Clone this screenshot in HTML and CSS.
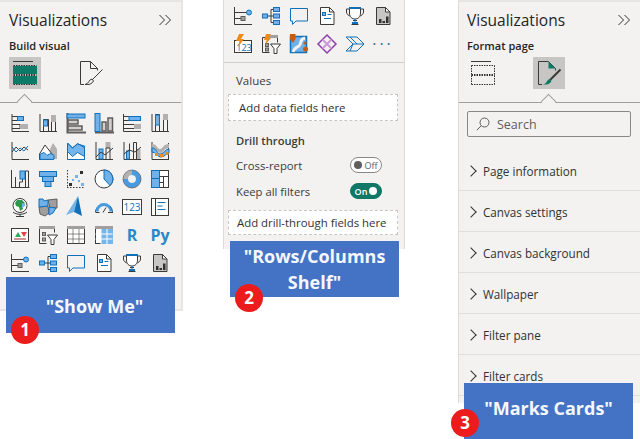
FILE: index.html
```html
<!DOCTYPE html>
<html lang="en">

<head>
  <meta charset="UTF-8">
  <meta name="viewport" content="width=device-width, initial-scale=1.0">
  <title>Visualizations pane</title>
  <link rel="stylesheet" href="styles.css">
</head>

<body>
  <svg class="defs" width="0" height="0">
    <!-- icons used more than once -->
    <symbol id="i-influencers" viewBox="0 0 20 20">
      <path class="d" d="M1.5 1v17.5H19M1.5 6.5H14M1.5 12.5H8"/>
      <circle class="bl" cx="16" cy="6.5" r="2.5"/>
      <rect class="gr" x="8" y="10.5" width="4" height="4"/>
    </symbol>
    <symbol id="i-decomp" viewBox="0 0 20 20">
      <path class="d" d="M7 10h3M10 3.500v13M10 3.500h2M10 10h2M10 16.500h2"/>
      <rect class="bl" x="1.500" y="8" width="5" height="4"/>
      <rect class="bl" x="12.500" y="1.500" width="6" height="4"/>
      <rect class="bl" x="12.500" y="8" width="6" height="4"/>
      <rect class="bl" x="12.500" y="14.500" width="6" height="4"/>
    </symbol>
    <symbol id="i-speech" viewBox="0 0 20 20">
      <path class="o" d="M1.500 2.500h17v12.500H7l-3.500 3.500V15H1.500z"/>
    </symbol>
    <symbol id="i-paginated" viewBox="0 0 20 20">
      <path class="dw" d="M3.500 1.500h9l4.500 4.500v12.500H3.500z"/>
      <path class="d" d="M12.500 1.500V6H17"/>
      <rect class="bl" x="5.500" y="6.500" width="3" height="3"/>
      <path class="o" d="M10.500 8.500h4M7 12.500h7"/>
    </symbol>
    <symbol id="i-trophy" viewBox="0 0 20 20">
      <path class="d" d="M4 3H1.500v3c0 2 2 4 4.500 4M16 3h2.500v3c0 2-2 4-4.500 4M8 14.500h4M6.500 18.500h7"/>
      <path class="dw" d="M4.500 2.500h11V7c0 4-2.500 6-5.500 6S4.500 11 4.500 7z"/>
      <rect class="fb" x="4" y="1" width="12" height="2"/>
      <rect class="fb" x="7" y="16" width="6" height="2"/>
      <path class="o" d="M10 13v3"/>
    </symbol>
    <symbol id="i-report" viewBox="0 0 20 20">
      <path class="dg" d="M3.500 1.500h9l4.500 4.500v12.500H3.500z"/>
      <path class="dw" d="M12.500 1.500V6H17z"/>
      <path class="fd" d="M6 13h2.500v4H6zM9.500 15H12v2H9.500zM13 10.500h2.500V17H13z"/>
    </symbol>
  </svg>

  <!-- panel 1 -->
  <aside class="panel panel-build">
    <header class="pane-head">
      <h2>Visualizations</h2>
      <svg class="collapse" viewBox="0 0 14 12"><path d="M1.500 1l5 5-5 5M7.500 1l5 5-5 5"/></svg>
    </header>
    <h3 class="pane-sub">Build visual</h3>
    <div class="tabs">
      <button class="tab on">
        <svg viewBox="0 0 24 24">
          <path class="d" d="M0 .5h20"/>
          <rect class="fg" x="0" y="5" width="24" height="8"/>
          <rect class="fg" x="0" y="15" width="24" height="8"/>
          <path class="dash" d="M.5 4.500h23M.5 13.500h23M.5 14.500h23M.5 23.500h23"/>
        </svg>
      </button>
      <button class="tab">
        <svg viewBox="0 0 24 24">
          <path class="d" d="M1.500 23.500V.5h10l7 7v2M1.500 23.500H5M11.500.5v7h7"/>
          <path class="d" d="M23.500 8.500L13 19"/>
          <path class="d" d="M13 18c-3 0-3 5-7 5.500 4 .5 7-.5 8.500-3.500z"/>
        </svg>
      </button>
    </div>
    <div class="sep notch"></div>
    <div class="icons">
      <!-- row 1 -->
      <svg class="ico" viewBox="0 0 20 20"><path class="d" d="M2 1v17.500h17M2 3.500h6v4H2M2 11.500h8v4H2"/><rect class="bl" x="7.500" y="3.500" width="6" height="4"/><rect class="fg2" x="10" y="11" width="8" height="5"/></svg>
      <svg class="ico" viewBox="0 0 20 20"><path class="d" d="M2 1v17.500h17M5.500 18V6.500h5V18M13.500 18V2.500h4V18"/><rect class="bl" x="5.500" y="7" width="4" height="6"/><rect class="fg2" x="13" y="2" width="5" height="7"/></svg>
      <svg class="ico" viewBox="0 0 20 20"><path class="thick" d="M1.500 0v19.500H20"/><rect class="bl2" x="1" y="1" width="18" height="4"/><rect class="gbox" x="2" y="7" width="10" height="4"/><rect class="gbox" x="2" y="13" width="14" height="4"/></svg>
      <svg class="ico" viewBox="0 0 20 20"><path class="thick" d="M1 19.500h19"/><rect class="bl2" x="1" y="0.500" width="5" height="18"/><rect class="gbox" x="8" y="9" width="4" height="9"/><rect class="gbox" x="14" y="5" width="4.500" height="13"/></svg>
      <svg class="ico" viewBox="0 0 20 20"><path class="d" d="M1.500 1v17.500H19M1.500 3.500h17v4h-17M1.500 11.500h17v4h-17"/><rect class="bl" x="7" y="3.500" width="11.500" height="4"/><rect class="fg2" x="12" y="11" width="7" height="5"/></svg>
      <svg class="ico" viewBox="0 0 20 20"><path class="d" d="M2 1v17.500h17M5.500 18V1.500h4V18M13.500 18V1.500h4V18"/><rect class="bl" x="5.500" y="2" width="4" height="10"/><rect class="fg2" x="13" y="1" width="5" height="6"/></svg>
      <!-- row 2 -->
      <svg class="ico" viewBox="0 0 20 20"><path class="d" d="M2 1v17.500h17M2 11l4-5 4 4 4-4 4 3"/><path class="o" d="M2 6l4 5 4-4 4 3 4-5"/></svg>
      <svg class="ico" viewBox="0 0 20 20"><path class="gfill" d="M2 13L7 5l4 5 4-8 4 6v10H2z"/><path class="dw" d="M1.500 18.500V13L7 4l7 9v5.500z"/><path class="lfill" d="M2 18v-5l4-2 3 3 4-2 3 2v4z" transform="translate(0 .4)"/></svg>
      <svg class="ico" viewBox="0 0 20 20"><path class="lfill" d="M1.500 2l5 5 5-4 7 2v13h-17z"/><path class="o" d="M1.500 2l5 5 5-4.500 7 4"/><path class="owhite" d="M1.500 10.500l5 5 5-4 7 4v3h-17z"/><path class="o" d="M1.500 18.500H19"/></svg>
      <svg class="ico" viewBox="0 0 20 20"><path class="d" d="M2 1v17.500h17"/><rect class="bl" x="5" y="8" width="4" height="10"/><rect class="fg2" x="11.500" y="1" width="5" height="6"/><path class="d" d="M12 18V7h4v11"/><path class="d" d="M2 16l5-5 4 3 8-7"/></svg>
      <svg class="ico" viewBox="0 0 20 20"><path class="d" d="M2 1v17.500h17M7.500 18V2.500M11.500 18V1.500h3V18"/><rect class="bl" x="4.500" y="10" width="3" height="8"/><rect class="fg2" x="15" y="8" width="3.500" height="10"/><path class="d" d="M2 13l5-4 6 2 6-5"/></svg>
      <svg class="ico" viewBox="0 0 20 20"><path class="dark" d="M2 1v17.500h17M18.500 18.500V2"/><path class="gfill" d="M2 3c5 0 5 5 8 5s3-5 9-5v4c-5 0-5 5-8 5S6 8 2 8z"/><path class="lfill" d="M2 7c5 0 5 7 9 6s4-5 8-5v4c-3 0-4 4-8 4S6 11 2 11z"/><rect class="ofill" x="5" y="12" width="3" height="3"/><rect class="ofill" x="10" y="13" width="3" height="3"/><rect class="ofill" x="15.500" y="11" width="3" height="3"/></svg>
      <!-- row 3 -->
      <svg class="ico" viewBox="0 0 20 20"><path class="d" d="M1.500 1v18M1.500 18.500h18M5.500 18V8M9.500 18v-5h3V5M12.500 5h3M18.500 2v16M15.500 2h3M15.500 2v16"/><rect class="bl" x="10" y="2" width="5" height="8" /></svg>
      <svg class="ico" viewBox="0 0 20 20"><rect class="bl" x="1.500" y="2.500" width="17" height="5"/><rect class="bl" x="4.500" y="7.500" width="11" height="5"/><rect class="bl" x="7" y="12.500" width="6" height="5"/></svg>
      <svg class="ico" viewBox="0 0 20 20"><path class="d" d="M1.500 1v18M1 18.500h18" stroke-dasharray="1.500 1.500"/><rect class="fd" x="14" y="2" width="3" height="3"/><rect class="fl" x="9" y="6" width="3" height="3"/><rect class="fl" x="6" y="10" width="2" height="2"/><rect class="fd" x="3" y="14" width="3" height="3"/><rect class="fl" x="12" y="11" width="2" height="2"/><rect class="fl" x="15" y="14" width="3" height="3"/></svg>
      <svg class="ico" viewBox="0 0 20 20"><circle class="dw" cx="10" cy="10" r="9"/><path class="bl" d="M10 10V1a9 9 0 0 1 6 15.500z"/></svg>
      <svg class="ico" viewBox="0 0 20 20"><circle class="donut-g" cx="10" cy="10" r="6.500"/><path class="donut-b" d="M10 3.500a6.500 6.500 0 1 1-6.500 6.500"/><circle class="thin" cx="10" cy="10" r="9"/></svg>
      <svg class="ico" viewBox="0 0 20 20"><rect class="dw" x="1.500" y="1.500" width="17" height="17"/><rect class="bl" x="1.500" y="1.500" width="8" height="8"/><rect class="bl" x="1.500" y="9.500" width="8" height="9"/><path class="d" d="M9.500 7.500h9M13.500 7.500v11M9.500 13.500h4"/></svg>
      <!-- row 4 -->
      <svg class="ico" viewBox="0 0 20 20"><circle class="dw" cx="10" cy="8.500" r="7"/><path class="fgreen" d="M7 3l5 0 3 3-3 3 1 3-3 2-1-4-3-1-1-3z"/><path class="fl" d="M12 6l3 1 0 2-3 2z"/><path class="d" d="M3 15c3 3 11 3 14 0M10 17v2M6 19.500h8"/></svg>
      <svg class="ico" viewBox="0 0 20 20"><path class="gfill2" d="M1 10l9-1 1 7-4 3-5-2z"/><path class="gfill2" d="M10 3l9-1v9l-7 0z"/><path class="bl2" d="M1 2l4 0 1 2 4-1v6l-9 1z"/><path class="bl2" d="M11 10l7 1-3 5-4 2z"/></svg>
      <svg class="ico" viewBox="0 0 20 20"><path class="fl" d="M12-1L0 18l8-3z"/><path class="fb" d="M12-1l-4 16 8 4z"/></svg>
      <svg class="ico" viewBox="0 0 20 20"><path class="dark" d="M1.500 15A8.500 8.500 0 0 1 3 10.500"/><path class="arc-l" d="M3 14.500a7 7 0 0 1 14 0"/><path class="o" d="M18.500 15A8.500 8.500 0 0 0 16 9"/><path class="d" d="M9 15.500l3-5"/><path class="d" d="M1.500 15.500h4M14 15.500h5"/></svg>
      <svg class="ico" viewBox="0 0 20 20"><rect class="dw" x="0.500" y="2.500" width="19" height="15"/><text class="txt-123" x="10" y="14">123</text></svg>
      <svg class="ico" viewBox="0 0 20 20"><rect class="dw" x="1.500" y="1.500" width="17" height="17"/><path class="d" d="M5.500 2v16"/><path class="o" d="M7.500 5.500h8M7.500 9h5M7.500 12.500h8"/></svg>
      <!-- row 5 -->
      <svg class="ico" viewBox="0 0 20 20"><rect class="dw" x="1.500" y="3.500" width="17" height="13"/><path class="tri-g" d="M5 12l3-5 3 5z"/><path class="tri-r" d="M11 7h6l-3 5z"/><path class="redl" d="M4 14h12"/></svg>
      <svg class="ico" viewBox="0 0 20 20"><path class="d" d="M1.500 18.500V1.500h15v6M1.500 18.500h7"/><rect class="fd2" x="1" y="1" width="16" height="3"/><rect class="gr" x="4.500" y="7.500" width="3" height="3"/><rect class="gr" x="4.500" y="13" width="3" height="3"/><path class="dw" d="M9.500 10h10l-3.500 4.500v5h-3v-5z"/></svg>
      <svg class="ico" viewBox="0 0 20 20"><rect class="dw" x="1.500" y="1.500" width="17" height="17"/><rect class="fd2" x="1" y="1" width="18" height="3"/><path class="thin" d="M1.500 9h17M1.500 14h17M7 4v15M13 4v15"/></svg>
      <svg class="ico" viewBox="0 0 20 20"><rect class="dw" x="1.500" y="1.500" width="17" height="17"/><rect class="fd2" x="1" y="1" width="18" height="3"/><rect class="fl" x="7" y="4" width="12" height="15"/><path class="thin-w" d="M1.500 9h17M1.500 14h17M7 4v15M13 4v15"/></svg>
      <span class="lang">R</span>
      <span class="lang py">Py</span>
      <!-- row 6 -->
      <svg class="ico"><use href="#i-influencers"/></svg>
      <svg class="ico"><use href="#i-decomp"/></svg>
      <svg class="ico"><use href="#i-speech"/></svg>
      <svg class="ico"><use href="#i-paginated"/></svg>
      <svg class="ico"><use href="#i-trophy"/></svg>
      <svg class="ico"><use href="#i-report"/></svg>
    </div>
  </aside>

  <!-- panel 2 -->
  <aside class="panel panel-drill">
    <div class="icons icons-top">
      <svg class="ico"><use href="#i-influencers"/></svg>
      <svg class="ico"><use href="#i-decomp"/></svg>
      <svg class="ico"><use href="#i-speech"/></svg>
      <svg class="ico"><use href="#i-paginated"/></svg>
      <svg class="ico"><use href="#i-trophy"/></svg>
      <svg class="ico"><use href="#i-report"/></svg>
      <svg class="ico" viewBox="0 0 20 20"><rect class="dw" x="1.500" y="6.500" width="17" height="12"/><text class="txt-123 small" x="11" y="16.500">123</text><path class="ofill" d="M6 0h5L8 5h3l-6 8 1.500-6H3z"/></svg>
      <svg class="ico" viewBox="0 0 20 20"><path class="d" d="M1.500 18.500V3.500h15v5M1.500 18.500h7"/><rect class="fd2" x="5" y="1" width="12" height="3"/><rect class="gr" x="4.500" y="9.500" width="3" height="3"/><rect class="gr" x="4.500" y="14" width="3" height="3"/><path class="dw" d="M9.500 10h10l-3.500 4.500v5h-3v-5z"/><path class="ofill" d="M5 0h5L7.500 4H10L4 11l1.500-5H3z"/></svg>
      <svg class="ico" viewBox="0 0 20 20"><rect class="map-bg" x="1.500" y="2.500" width="16" height="16"/><path class="map-road" d="M16 4c-6 1-3 6-6 8s-5 2-6 6"/><path class="ofill2" d="M1 0h5.500v5L4 9 1 5z"/><circle class="ofill2" cx="16.500" cy="15" r="2.500"/><circle class="ofill2" cx="16" cy="9" r="1.500"/></svg>
      <svg class="ico" viewBox="0 0 20 20"><path class="purple" d="M10 1l9 9-9 9-9-9z"/><path class="purple-t" d="M5.500 5.500l9 9M14.500 5.500l-9 9"/></svg>
      <svg class="ico" viewBox="0 0 20 20"><path class="o" d="M1 3h11l7 7-7 7H1l7-7z"/><path class="o" d="M8 10h11M5 3l7 7M8 10l-3 7"/></svg>
      <span class="more">&middot;&middot;&middot;</span>
    </div>
    <div class="sep"></div>
    <div class="field-group">
      <p class="field-label">Values</p>
      <div class="well">Add data fields here</div>
      <p class="drill-head">Drill through</p>
      <div class="toggle-row">
        <span>Cross-report</span>
        <span class="toggle">
          <i class="knob"></i>Off
        </span>
      </div>
      <div class="toggle-row">
        <span>Keep all filters</span>
        <span class="toggle is-on">
          On<i class="knob"></i>
        </span>
      </div>
      <div class="well well-drill">Add drill-through fields here</div>
    </div>
  </aside>

  <!-- panel 3 -->
  <aside class="panel panel-format">
    <header class="pane-head">
      <h2>Visualizations</h2>
      <svg class="collapse" viewBox="0 0 14 12"><path d="M1.500 1l5 5-5 5M7.500 1l5 5-5 5"/></svg>
    </header>
    <h3 class="pane-sub">Format page</h3>
    <div class="tabs tabs-format">
      <button class="tab">
        <svg viewBox="0 0 24 24">
          <path class="d" d="M0 .5h20"/>
          <path class="dash" d="M.5 4.500h23M.5 13.500h23M.5 14.500h23M.5 23.500h23M.5 4.500v9M23.500 4.500v9M.5 14.500v9M23.500 14.500v9"/>
        </svg>
      </button>
      <button class="tab on">
        <svg viewBox="0 0 24 24">
          <path class="d" d="M1.500 23.500V.5h10l7 7v2M1.500 23.500H5"/>
          <path class="fg" d="M11.500.5l7 7h-7z"/>
          <path class="brush" d="M23.500 8.500L13 19"/>
          <path class="fg" d="M13 18c-3 0-3 5-7 5.500 4 .5 7-.5 8.500-3.500z"/>
        </svg>
      </button>
    </div>
    <div class="sep notch"></div>
    <div class="search">
      <svg viewBox="0 0 14 14"><circle cx="8.500" cy="5.500" r="4.500"/><path d="M5.200 8.800L.8 13.200"/></svg>
      <span>Search</span>
    </div>
    <ul class="cards">
      <li>Page information</li>
      <li>Canvas settings</li>
      <li>Canvas background</li>
      <li>Wallpaper</li>
      <li>Filter pane</li>
      <li>Filter cards</li>
    </ul>
  </aside>

  <div class="note note-1">"Show Me"</div>
  <div class="note note-2"><span>"Rows/Columns</span><span>Shelf"</span></div>
  <div class="note note-3">"Marks Cards"</div>

  <span class="badge badge-1">1</span>
  <span class="badge badge-2">2</span>
  <span class="badge badge-3">3</span>
</body>

</html>
```

FILE: styles.css
```css
html,
body {
  margin: 0;
  height: 100%;
}

body {
  position: relative;
  width: 640px;
  height: 439px;
  overflow: hidden;
  background: white;
  font: normal 12px "Open Sans", "Noto Sans", sans-serif;
  color: #323130;
}

.defs {
  position: absolute;
}

/* the picture is a collage, so panels sit on a free canvas */
.panel {
  position: absolute;
  top: 0;
  box-sizing: border-box;
  background: #f3f2f1;
  border-top: 2px solid #e6e5e4;
}

.panel-build {
  left: 0;
  width: 183px;
  height: 311px;
  border-right: 2px solid #e6e5e4;
  border-bottom: 2px solid #e6e5e4;
}

.panel-drill {
  left: 223px;
  width: 182px;
  height: 249px;
  border-top: 0;
  border-left: 1px solid #dcdad8;
  border-right: 1px solid #dcdad8;
}

.panel-format {
  left: 458px;
  width: 182px;
  height: 403px;
  border-left: 1px solid #dcdad8;
}

.pane-head {
  display: flex;
  justify-content: space-between;
  align-items: center;
  height: 21px;
  margin-top: 7px;
  padding: 0 9px;
}

.panel-format .pane-head {
  padding-left: 8px;
}

.pane-head h2 {
  margin: 0;
  font-size: 15.500px;
  font-weight: 400;
  color: #252423;
}

.collapse {
  width: 14px;
  height: 12px;
  fill: none;
  stroke: #323130;
  stroke-width: 1;
}

.pane-sub {
  margin: 8px 0 0 9px;
  font-size: 11px;
  font-weight: 600;
  line-height: 16px;
  color: #252423;
}

.panel-format .pane-sub {
  margin-left: 8px;
}

.tabs {
  display: flex;
  gap: 34px;
  margin: 3px 0 0 9px;
}

.tabs-format {
  margin-left: 8px;
}

.tab {
  display: flex;
  align-items: center;
  justify-content: center;
  width: 32px;
  height: 32px;
  padding: 0;
  border: 0;
  background: none;
}

.tab.on {
  background: #c8c6c4;
}

.tab svg {
  width: 24px;
  height: 24px;
}

.sep {
  height: 1px;
  background: #d2d0ce;
}

.notch {
  position: relative;
  margin-top: 13px;
  background: #a19f9d;
}

.notch::after {
  content: "";
  position: absolute;
  left: 19px;
  top: -6px;
  width: 10px;
  height: 10px;
  background: #f3f2f1;
  border-left: 1px solid #a19f9d;
  border-top: 1px solid #a19f9d;
  transform: rotate(45deg);
}

.panel-format .notch::after {
  left: 84px;
}

.icons {
  display: grid;
  grid-template-columns: repeat(6, 28px);
  grid-auto-rows: 28px;
  padding: 6px 0 0 6px;
}

.icons-top {
  padding: 2px 0 4px 5px;
}

.ico {
  display: block;
  width: 20px;
  height: 20px;
  margin: 4px;
  overflow: visible;
}

.lang {
  display: block;
  font: bold 16px/28px "Open Sans", sans-serif;
  text-align: center;
  color: #2b88c8;
}

.more {
  font: normal 16px/28px "Open Sans", sans-serif;
  letter-spacing: 3px;
  text-align: center;
  color: #2d6f9f;
}

/* icon paints */
.d { fill: none; stroke: #3b3a39; stroke-width: 1; }
.dw { fill: white; stroke: #3b3a39; stroke-width: 1; }
.dg { fill: #c8c6c4; stroke: #3b3a39; stroke-width: 1; }
.dark { fill: none; stroke: #3b3a39; stroke-width: 1; }
.thick { fill: none; stroke: #605e5c; stroke-width: 2; }
.o { fill: none; stroke: #1170b8; stroke-width: 1; }
.owhite { fill: white; stroke: #1170b8; stroke-width: 1; }
.bl { fill: #6fb1e8; stroke: #1170b8; stroke-width: 1; }
.bl2 { fill: #6fb1e8; stroke: #1170b8; stroke-width: 1; }
.gr { fill: #a19f9d; stroke: #605e5c; stroke-width: 1; }
.gbox { fill: #d2d0ce; stroke: #605e5c; stroke-width: 1.500; }
.fg { fill: #0d7a68; }
.fg2 { fill: #b3b0ad; }
.fb { fill: #1170b8; }
.fd { fill: #323130; }
.fd2 { fill: #a19f9d; }
.fl { fill: #74b5ec; }
.fgreen { fill: #2e9a45; }
.gfill { fill: #b3b0ad; }
.gfill2 { fill: #a19f9d; stroke: #605e5c; stroke-width: 1; }
.lfill { fill: #74b5ec; stroke: #1170b8; stroke-width: 1; }
.ofill { fill: #ed8b1b; }
.ofill2 { fill: #c85a10; }
.dash { fill: none; stroke: #323130; stroke-width: 1; stroke-dasharray: 1.500 1; }
.donut-g { fill: none; stroke: #b3b0ad; stroke-width: 5; }
.donut-b { fill: none; stroke: #4a9ae0; stroke-width: 5; }
.thin { fill: none; stroke: #605e5c; stroke-width: .7; }
.thin-w { fill: none; stroke: white; stroke-width: 1; }
.arc-l { fill: none; stroke: #4a9ae0; stroke-width: 3; }
.tri-g { fill: #35a85a; }
.tri-r { fill: #e8404a; }
.redl { stroke: #a4262c; stroke-width: 1; }
.map-bg { fill: #6fb1e8; stroke: #1170b8; stroke-width: 1.500; }
.map-road { fill: none; stroke: #f3f2f1; stroke-width: 3; }
.purple { fill: none; stroke: #8f3fa8; stroke-width: 1.500; }
.purple-t { fill: none; stroke: #c99ad6; stroke-width: 2; }
.brush { fill: none; stroke: #3b3a39; stroke-width: 2; }

.txt-123 {
  font: 10px "Open Sans", sans-serif;
  text-anchor: middle;
  fill: #1170b8;
}

.txt-123.small {
  font-size: 9px;
}

.field-group {
  padding: 9px 6px 0 4px;
}

.field-label {
  margin: 0 0 4px 8px;
  font-size: 11.500px;
  line-height: 18px;
  color: #3b3a39;
}

.well {
  box-sizing: border-box;
  height: 27px;
  padding-left: 10px;
  background: white;
  border: 1px dashed #c8c6c4;
  font-size: 11.400px;
  line-height: 25px;
  color: #323130;
}

.drill-head {
  margin: 11px 0 3px 8px;
  font-size: 11.200px;
  font-weight: 600;
  line-height: 17px;
  color: #3b3a39;
}

.toggle-row {
  display: flex;
  justify-content: space-between;
  align-items: center;
  height: 26px;
  padding: 0 16px 0 8px;
  font-size: 11.300px;
  color: #3b3a39;
}

.toggle {
  display: flex;
  align-items: center;
  justify-content: center;
  gap: 2px;
  box-sizing: border-box;
  width: 32px;
  height: 16px;
  border: 1px solid #8a8886;
  border-radius: 8px;
  background: white;
  font-size: 9px;
  color: #605e5c;
}

.toggle.is-on {
  border-color: #117865;
  background: #117865;
  color: white;
  font-weight: 600;
}

.knob {
  width: 8px;
  height: 8px;
  border-radius: 50%;
  background: #605e5c;
}

.is-on .knob {
  background: white;
}

.well-drill {
  height: 25px;
  margin-top: 6px;
  padding-left: 8px;
  line-height: 23px;
}

.search {
  display: flex;
  align-items: center;
  gap: 7px;
  box-sizing: border-box;
  height: 26px;
  margin: 8px 9px 0 8px;
  padding-left: 8px;
  border: 1px solid #8a8886;
  border-radius: 2px;
  font-size: 12.500px;
  color: #605e5c;
}

.search svg {
  width: 14px;
  height: 14px;
  fill: none;
  stroke: #605e5c;
}

.cards {
  margin: 13px 0 0;
  padding: 0;
  list-style: none;
}

.cards li {
  position: relative;
  box-sizing: border-box;
  height: 41px;
  padding: 12px 0 0 24px;
  border-bottom: 1px solid #e1dfdd;
  font-size: 11.700px;
  line-height: 18px;
  color: #323130;
}

.cards li::before {
  content: "";
  position: absolute;
  left: 8px;
  top: 17px;
  width: 7px;
  height: 7px;
  border-top: 1px solid #323130;
  border-right: 1px solid #323130;
  transform: rotate(45deg);
}

/* captions and numbers lie over the panels */
.note {
  position: absolute;
  display: flex;
  align-items: center;
  justify-content: center;
  box-sizing: border-box;
  width: 169px;
  height: 56px;
  background: #4472c4;
  font: bold 18px/26px "Open Sans", "Noto Sans", sans-serif;
  text-align: center;
  color: #f4f7fc;
}

.note-1 {
  left: 6px;
  top: 277px;
  padding: 2px 0 0 8px;
}

.note-2 {
  left: 230px;
  top: 241px;
  flex-direction: column;
}

.note-3 {
  left: 464px;
  top: 383px;
  padding-bottom: 6px;
}

.badge {
  position: absolute;
  width: 28px;
  height: 28px;
  border-radius: 50%;
  background: #ed1c1c;
  font: bold 17px/28px "Open Sans", sans-serif;
  text-align: center;
  color: white;
}

.badge-1 {
  left: 11px;
  top: 316px;
}

.badge-2 {
  left: 235px;
  top: 284px;
}

.badge-3 {
  left: 451px;
  top: 409px;
}
```
